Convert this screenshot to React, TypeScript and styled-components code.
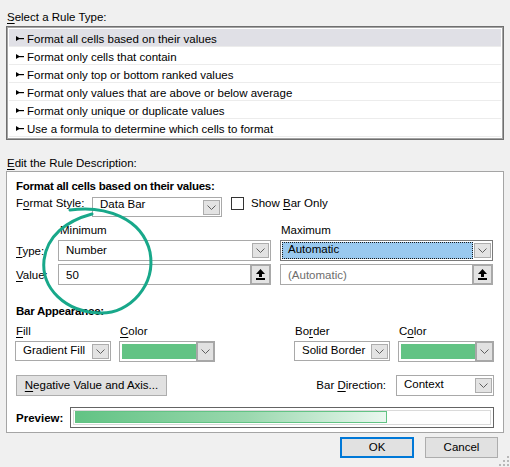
import React from 'react';
import styled, { createGlobalStyle } from 'styled-components';

const GlobalStyle = createGlobalStyle`
  html, body { margin: 0; padding: 0; background: #f0f0f0; }
  body {
    font-family: "Liberation Sans", Arial, sans-serif;
    font-size: 11.5px;
    color: #000;
  }
`;

const Dialog = styled.div`
  position: relative;
  width: 510px;
  height: 467px;
  box-sizing: border-box;
  padding: 0 6px;
  background: #f0f0f0;
  overflow: hidden;
`;

const SectionLabel = styled.div<{ $top: number }>`
  margin-top: ${p => p.$top}px;
  padding-left: 1px;
  height: 16px;
  line-height: 16px;
`;

const ListBox = styled.div`
  margin-top: 1px;
  box-sizing: border-box;
  height: 114px;
  border: 1px solid #6f6f6f;
  box-shadow: inset 0 0 0 1px #a3a3a3;
  background: #fff;
  padding: 2px 2px;
`;

const ListRow = styled.div<{ $selected?: boolean }>`
  height: 17px;
  border-bottom: 1px solid #ececec;
  background: ${p => (p.$selected ? '#e0e0e6' : '#fff')};
  display: flex;
  align-items: flex-start;
  padding-left: 7px;
  gap: 3px;
  line-height: 21px;
  white-space: nowrap;

  svg {
    align-self: center;
    margin-top: 1px;
  }
`;

const GroupBox = styled.div`
  box-sizing: border-box;
  height: 262px;
  border: 1px solid #a5a5a5;
  background: #fff;
  padding: 6px 9px 0 9px;
`;

const BoldTitle = styled.div<{ $top?: number }>`
  margin-top: ${p => p.$top ?? 0}px;
  font-weight: bold;
  letter-spacing: -0.25px;
  height: 16px;
  line-height: 16px;
`;

const Row = styled.div<{ $top: number; $h: number; $start?: boolean }>`
  margin-top: ${p => p.$top}px;
  height: ${p => p.$h}px;
  display: flex;
  align-items: ${p => (p.$start ? 'flex-start' : 'center')};
`;

const FieldLabel = styled.span<{ $w: number; $lift?: number }>`
  width: ${p => p.$w}px;
  flex: none;
  line-height: 16px;
  margin-top: ${p => -(p.$lift ?? 0)}px;
  white-space: nowrap;
`;

const Combo = styled.div<{ $w: number; $h?: number; $active?: boolean }>`
  box-sizing: border-box;
  width: ${p => p.$w}px;
  flex: none;
  height: ${p => p.$h ?? 20}px;
  border: 1px solid ${p => (p.$active ? '#7a7a7a' : '#a9a9a9')};
  background: #fff;
  display: flex;
  align-items: center;
  padding: 0 1px;
`;

const ComboText = styled.span<{ $active?: boolean; $muted?: boolean; $pt?: number }>`
  flex: 1;
  align-self: stretch;
  margin: ${p => 1 + Math.min(p.$pt ?? 0, 0)}px 1px 1px 0;
  box-sizing: border-box;
  padding-left: 6px;
  padding-top: ${p => Math.max(p.$pt ?? 0, 0)}px;
  line-height: 13px;
  white-space: nowrap;
  color: ${p => (p.$muted ? '#6d6d6d' : '#000')};
  background: ${p => (p.$active ? '#99c9ef' : 'transparent')};
  outline: ${p => (p.$active ? '1px dotted #1a1a1a' : 'none')};
  outline-offset: -1px;
`;

const DropButton = styled.span`
  flex: none;
  box-sizing: border-box;
  width: 17px;
  height: 15px;
  border: 1px solid #adadad;
  background: #e3e3e3;
  display: flex;
  align-items: center;
  justify-content: center;
`;

const UpButton = styled.span`
  flex: none;
  box-sizing: border-box;
  width: 21px;
  height: 21px;
  margin: -1px -2px -1px 0;
  border: 2px solid #a9a9a9;
  background: #e3e3e3;
  display: flex;
  align-items: center;
  justify-content: center;
`;

const CheckBox = styled.span`
  box-sizing: border-box;
  width: 13px;
  height: 13px;
  border: 1px solid #333;
  background: #fff;
  margin: 0 7px 0 9px;
  flex: none;
`;

const ColorCombo = styled.div`
  box-sizing: border-box;
  width: 96px;
  height: 21px;
  border: 1px solid #a9a9a9;
  background: #fff;
  display: flex;
  padding: 1px 0 0 1px;
`;

const Swatch = styled.span`
  flex: 1;
  margin: 1px 0 2px 1px;
  background: #62c384;
`;

const ColorDrop = styled.span`
  flex: none;
  width: 19px;
  margin: -2px -1px -1px 0;
  box-sizing: border-box;
  border: 2px solid #a7a7a7;
  background: #e1e1e1;
  display: flex;
  align-items: center;
  justify-content: center;
`;

const Grid = styled.div<{ $top?: number }>`
  margin-top: ${p => p.$top ?? 0}px;
  display: grid;
  grid-template-columns: 33px 213px 213px;
  column-gap: 9px;
`;

const Appearance = styled.div`
  margin-top: 4px;
  margin-left: -1px;
  display: flex;
  justify-content: space-between;
`;

const Pair = styled.div`
  display: flex;
  gap: 8px;
`;

const Column = styled.div`
  display: flex;
  flex-direction: column;
`;

const ColumnLabel = styled.span<{ $pl?: number }>`
  padding-left: ${p => p.$pl ?? 1}px;
  height: 16px;
  line-height: 16px;
  margin-bottom: 2px;
`;

const PushButton = styled.button<{ $w: number; $default?: boolean }>`
  box-sizing: border-box;
  width: ${p => p.$w}px;
  height: 21px;
  padding: 0;
  font: inherit;
  color: #000;
  background: #e1e1e1;
  border: ${p => (p.$default ? '2px solid #0078d7' : '1px solid #adadad')};
  line-height: 13px;
  flex: none;
`;

const Spacer = styled.span`
  flex: 1;
`;

const DirLabel = styled.span`
  margin-right: 10px;
  line-height: 16px;
`;

const PreviewBox = styled.div`
  flex: 1;
  box-sizing: border-box;
  height: 21px;
  border: 1px solid #646464;
  padding: 2px;
`;

const Track = styled.div`
  box-sizing: border-box;
  height: 15px;
  border: 1px solid #dadada;
  padding: 0 1px;
  display: flex;
  align-items: flex-start;
`;

const Bar = styled.div`
  box-sizing: border-box;
  height: 12px;
  border: 1px solid #62c384;
  background: linear-gradient(to right, #62c384 0%, #9ad8ae 55%, #eaf7ef 100%);
`;

const Footer = styled.div`
  margin-top: 4px;
  margin-right: 6px;
  display: flex;
  justify-content: flex-end;
  gap: 11px;
`;

const Overlay = styled.svg`
  position: absolute;
  left: 0;
  top: 0;
  pointer-events: none;
`;

const Grip = styled.svg`
  position: absolute;
  right: 1px;
  bottom: 1px;
`;

const U = styled.span`
  text-decoration: underline;
  text-underline-offset: 2px;
`;

const RuleArrow = () => (
  <svg width="8" height="5" viewBox="0 0 8 5">
    <path d="M0 0 L4 2.5 L0 5 Z" fill="#000" />
    <rect x="1" y="2" width="7" height="1.2" fill="#000" />
  </svg>
);

const Chevron = () => (
  <svg width="9" height="5" viewBox="0 0 9 5">
    <path d="M0.5 0.5 L4.5 4.5 L8.5 0.5" stroke="#5f5f5f" fill="none" strokeWidth="1" />
  </svg>
);

const UpArrow = () => (
  <svg width="9" height="11" viewBox="0 0 9 11">
    <path d="M4.5 0 L9 5 L6 5 L6 8 L3 8 L3 5 L0 5 Z" fill="#000" />
    <rect x="0" y="9" width="9" height="2" fill="#000" />
  </svg>
);

const rules = [
  'Format all cells based on their values',
  'Format only cells that contain',
  'Format only top or bottom ranked values',
  'Format only values that are above or below average',
  'Format only unique or duplicate values',
  'Use a formula to determine which cells to format',
];

type DropProps = { w: number; text: React.ReactNode; h?: number; pt?: number };

const DropCombo = ({ w, text, h, pt }: DropProps) => (
  <Combo $w={w} $h={h}>
    <ComboText $pt={pt}>{text}</ComboText>
    <DropButton>
      <Chevron />
    </DropButton>
  </Combo>
);

export default function App() {
  return (
    <Dialog>
      <GlobalStyle />
      <SectionLabel $top={9}>
        <U>S</U>elect a Rule Type:
      </SectionLabel>
      <ListBox>
        {rules.map((r, i) => (
          <ListRow key={r} $selected={i === 0}>
            <RuleArrow />
            <span>{r}</span>
          </ListRow>
        ))}
      </ListBox>

      <SectionLabel $top={15}>
        <U>E</U>dit the Rule Description:
      </SectionLabel>
      <GroupBox>
        <BoldTitle>Format all cells based on their values:</BoldTitle>
        <Row $top={3} $h={20} $start>
          <FieldLabel $w={76} $lift={2}>
            F<U>o</U>rmat Style:
          </FieldLabel>
          <DropCombo w={130} pt={-1} text="Data Bar" />
          <CheckBox />
          <FieldLabel $w={120} $lift={2}>
            Show <U>B</U>ar Only
          </FieldLabel>
        </Row>

        <Grid $top={5}>
          <span />
          <ColumnLabel $pl={2}>Minimum</ColumnLabel>
          <ColumnLabel>Maximum</ColumnLabel>
        </Grid>
        <Grid>
          <Row $top={0} $h={21}>
            <FieldLabel $w={33}>
              <U>T</U>ype:
            </FieldLabel>
          </Row>
          <Row $top={0} $h={21}>
            <DropCombo w={213} h={21} pt={2} text="Number" />
          </Row>
          <Row $top={0} $h={21}>
            <Combo $w={213} $h={21} $active>
              <ComboText $active $pt={1}>
                Automatic
              </ComboText>
              <DropButton>
                <Chevron />
              </DropButton>
            </Combo>
          </Row>
        </Grid>
        <Grid $top={3}>
          <Row $top={0} $h={21}>
            <FieldLabel $w={33}>
              <U>V</U>alue:
            </FieldLabel>
          </Row>
          <Row $top={0} $h={21}>
            <Combo $w={213} $h={21}>
              <ComboText $pt={3}>50</ComboText>
              <UpButton>
                <UpArrow />
              </UpButton>
            </Combo>
          </Row>
          <Row $top={0} $h={21}>
            <Combo $w={213} $h={21}>
              <ComboText $muted $pt={3}>
                (Automatic)
              </ComboText>
              <UpButton>
                <UpArrow />
              </UpButton>
            </Combo>
          </Row>
        </Grid>

        <BoldTitle $top={18}>Bar Appearance:</BoldTitle>
        <Appearance>
          <Pair>
            <Column>
              <ColumnLabel>
                <U>F</U>ill
              </ColumnLabel>
              <DropCombo w={96} pt={1} text="Gradient Fill" />
            </Column>
            <Column>
              <ColumnLabel>
                <U>C</U>olor
              </ColumnLabel>
              <ColorCombo>
                <Swatch />
                <ColorDrop>
                  <Chevron />
                </ColorDrop>
              </ColorCombo>
            </Column>
          </Pair>
          <Pair>
            <Column>
              <ColumnLabel>
                Bo<U>r</U>der
              </ColumnLabel>
              <DropCombo w={96} pt={1} text="Solid Border" />
            </Column>
            <Column>
              <ColumnLabel>
                C<U>o</U>lor
              </ColumnLabel>
              <ColorCombo>
                <Swatch />
                <ColorDrop>
                  <Chevron />
                </ColorDrop>
              </ColorCombo>
            </Column>
          </Pair>
        </Appearance>

        <Row $top={12} $h={22}>
          <PushButton $w={151}>
            <U>N</U>egative Value and Axis...
          </PushButton>
          <Spacer />
          <DirLabel>
            Bar <U>D</U>irection:
          </DirLabel>
          <DropCombo w={98} h={21} pt={1} text="Context" />
        </Row>

        <Row $top={11} $h={21}>
          <FieldLabel $w={54}>
            <b>Preview:</b>
          </FieldLabel>
          <PreviewBox>
            <Track>
              <Bar style={{ width: 312 }} />
            </Track>
          </PreviewBox>
        </Row>
      </GroupBox>

      <Footer>
        <PushButton $w={74} $default>
          OK
        </PushButton>
        <PushButton $w={73}>Cancel</PushButton>
      </Footer>

      <Overlay width="510" height="467" viewBox="0 0 510 467">
        <path
          d="M70 210 C 105 205, 142 218, 150 252 C 156 285, 130 314, 100 313 C 65 312, 41 288, 44 260 C 47 236, 66 221, 92 214"
          stroke="#18a88a"
          strokeWidth="3"
          fill="none"
          strokeLinecap="round"
        />
      </Overlay>
      <Grip width="10" height="10" viewBox="0 0 10 10">
        {[
          [8, 0],
          [8, 4],
          [4, 4],
          [8, 8],
          [4, 8],
          [0, 8],
        ].map(([x, y]) => (
          <rect key={`${x}-${y}`} x={x} y={y} width="2" height="2" fill="#b8b8b8" />
        ))}
      </Grip>
    </Dialog>
  );
}
